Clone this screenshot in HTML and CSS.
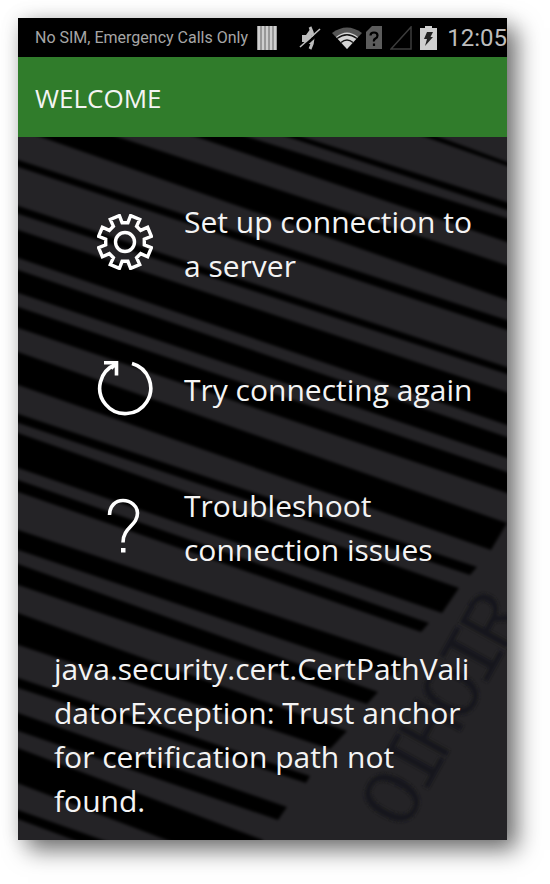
FILE: index.html
```html
<!DOCTYPE html>
<html lang="en">
<head>
<meta charset="utf-8">
<meta name="viewport" content="width=device-width, initial-scale=1">
<title>Welcome</title>
<link rel="stylesheet" href="styles.css">
</head>
<body>
<div class="screen">
  <div class="status">
    <span class="status__carrier">No SIM, Emergency Calls Only</span>
    <svg class="status__barcode" width="20" height="24" viewBox="0 0 20 24" aria-hidden="true">
      <rect width="20" height="24" fill="#8c8c8c"/>
      <path d="M2 0v24M6 0v24M10 0v24M14 0v24M18 0v24" stroke="#cfcfcf" stroke-width="2.4"/>
    </svg>
    <svg class="status__mute" width="22" height="24" viewBox="0 0 22 24" aria-hidden="true">
      <path d="M3 9h4l5-7v16l-4 0-1-2H3z" fill="#bdbdbd"/>
      <path d="M11 1Q17 12 11 23" fill="none" stroke="#bdbdbd" stroke-width="3"/>
      <path d="M2.500 22.500L22.500 4.500" stroke="#000" stroke-width="3"/>
      <path d="M1 21L21 3" stroke="#bdbdbd" stroke-width="1.6"/>
    </svg>
    <svg class="status__wifi" width="30" height="22" viewBox="0 0 30 22" aria-hidden="true">
      <path d="M0 6Q15-5 30 6L15 22z" fill="#555"/>
      <path d="M4 10Q15 1 26 10L15 22z" fill="#d4d4d4"/>
      <path d="M5 11.500Q15 4 25 11.500M9 15.500Q15 10.500 21 15.500" fill="none" stroke="#111" stroke-width="1.500"/>
    </svg>
    <svg class="status__sim" width="16" height="23" viewBox="0 0 16 23" aria-hidden="true">
      <path d="M6 0H16V23H0V6z" fill="#5c5c5c"/>
      <path d="M4.500 9.500Q4.500 6.500 8 6.500T11.500 9.500Q11.500 11.500 9.500 12.500T8 15.500M8 17.500v2.500" fill="none" stroke="#000" stroke-width="2.200"/>
    </svg>
    <svg class="status__signal" width="22" height="24" viewBox="0 0 22 24" aria-hidden="true">
      <path d="M21 1V23H1z" fill="none" stroke="#3c3c3c" stroke-width="1.500"/>
    </svg>
    <svg class="status__battery" width="17" height="24" viewBox="0 0 17 24" aria-hidden="true">
      <path d="M5 0h7v2h5v22H0V2h5z" fill="#cfcfcf"/>
      <path d="M7 6h6l-2.500 5H13L5 20l2-7H4z" fill="#222"/>
    </svg>
    <time class="status__clock">12:05</time>
  </div>
  <header class="bar"><h1 class="bar__title">WELCOME</h1></header>
  <main class="content">
    <svg class="backdrop" viewBox="0 0 489 703" preserveAspectRatio="none" aria-hidden="true">
      <defs><filter id="soft" x="-5%" y="-5%" width="110%" height="110%"><feGaussianBlur stdDeviation="1.5"/></filter></defs>
      <g filter="url(#soft)" fill="#040406">
        <path d="M405-6L495 27V31L385-8z"/>
        <path d="M260-8L495 67V75L240-10z"/>
        <path d="M205-8L495 83V107L155-8z"/>
        <path d="M76-8L495 130V165L0-8z"/>
        <path d="M-6 21L495 185V195L-6 28z"/>
        <path d="M-6 67L495 232V239L-6 75z"/>
        <path d="M-6 91L495 257V290L-6 119z"/>
        <path d="M-6 131L495 302V323L-6 154z"/>
        <path d="M-6 168L495 337V358L-6 189z"/>
        <path d="M-6 213L489 386L473 413L-6 246z"/>
        <path d="M-6 275L459 430L452 438L-6 284z"/>
        <path d="M-6 294L441 451L424 476L-6 329z"/>
        <path d="M-6 341L411 486L403 495L-6 353z"/>
        <path d="M-6 391L388 522L375 540L-6 411z"/>
        <path d="M-6 425L360 555L349 567L-6 446z"/>
        <path d="M-6 474L329 594L312 612L-6 506z"/>
        <path d="M-6 539L292 639L288 646L-6 549z"/>
        <path d="M-6 574L269 670L260 683L-6 592z"/>
        <path d="M-6 609L245 703V715H180L-6 644z"/>
        <path d="M-6 671L110 712H80L-6 680z"/>
      </g>
      <text class="backdrop__code" filter="url(#soft)" transform="translate(386 696) rotate(-61)" x="0 42 80 122 164 204">OIHOIR</text>
    </svg>
    <nav class="menu">
      <button class="menu__item menu__item--setup" type="button">
        <svg class="menu__icon" viewBox="0 0 56 56" aria-hidden="true">
          <g fill="none" stroke="#fff" stroke-width="3.400" stroke-linejoin="miter">
            <circle cx="28" cy="28" r="9.500"/>
            <path id="gear" d=""/>
          </g>
        </svg>
        <span>Set up connection to a server</span>
      </button>
      <button class="menu__item" type="button">
        <svg class="menu__icon" viewBox="0 0 56 56" aria-hidden="true">
          <g fill="none" stroke="#fff" stroke-width="3.600">
            <path d="M35 3.500A25.500 25.500 0 1 1 18.500 4.500"/>
            <path d="M7 2.700H19.500V15.500M19.500 2.700L14 8.500"/>
          </g>
        </svg>
        <span>Try connecting again</span>
      </button>
      <button class="menu__item" type="button">
        <svg class="menu__icon" viewBox="0 0 56 56" aria-hidden="true">
          <path d="M12.500 17C12.500 8 18.500 2.500 26 2.500S40.500 8 40.500 15C40.500 28 26 29 26 44.500" fill="none" stroke="#fff" stroke-width="3.600"/>
          <rect x="24" y="50" width="4.500" height="4.500" fill="#fff"/>
        </svg>
        <span>Troubleshoot connection issues</span>
      </button>
    </nav>
    <p class="error">java.security.cert.CertPathVali<wbr>datorException: Trust anchor for certification path not found.</p>
  </main>
</div>
<script src="gear.js"></script>
</body>
</html>
```
FILE: gear.js
```js
// Builds the outline of the eight-toothed settings gear.
const points = [];
for (let tooth = 0; tooth < 8; tooth++) {
  const middle = (tooth + 0.5) * 45;
  for (const [offset, radius] of [[-14, 19.5], [-10.5, 27], [10.5, 27], [14, 19.5]]) {
    const angle = (middle + offset) * Math.PI / 180;
    points.push((28 + radius * Math.cos(angle)).toFixed(2) + " " + (28 + radius * Math.sin(angle)).toFixed(2));
  }
}
document.getElementById("gear").setAttribute("d", "M" + points.join("L") + "Z");
```
FILE: styles.css
```css
* {
  box-sizing: border-box;
}

body {
  margin: 0;
  padding: 18px 43px 44px 18px;
  background: #fff;
  font-family: "Open Sans", "Noto Sans", sans-serif;
  color: #f4f4f4;
}

.screen {
  background: #242326;
  box-shadow: 10px 10px 22px rgba(0, 0, 0, 0.55), 0 0 18px rgba(0, 0, 0, 0.1);
}

.status {
  display: flex;
  align-items: center;
  height: 39px;
  padding-left: 17px;
  overflow: hidden;
  background: #000;
  color: #a6a6a6;
  font-family: Roboto, sans-serif;
  white-space: nowrap;
}

.status svg {
  flex: none;
}

.status__carrier {
  font-size: 16px;
}

.status__barcode {
  margin-left: auto;
}

.status__mute {
  margin-left: 22px;
}

.status__wifi {
  margin-left: 11px;
}

.status__sim {
  margin-left: 4px;
}

.status__signal {
  margin-left: 8px;
}

.status__battery {
  margin-left: 8px;
}

.status__clock {
  margin-left: 10px;
  font-size: 24px;
  color: #bdbdbd;
}

.bar {
  display: flex;
  align-items: center;
  height: 80px;
  padding: 2px 17px 0;
  background: #307c2b;
}

.bar__title {
  margin: 0;
  font-size: 26px;
  font-weight: 400;
}

.content {
  position: relative;
  padding: 63px 20px 17px 36px;
  overflow: hidden;
}

.backdrop {
  position: absolute;
  inset: 0;
  width: 100%;
  height: 100%;
}

.backdrop__code {
  font-family: "Liberation Mono", monospace;
  font-size: 84px;
  fill: #18181b;
}

.menu {
  position: relative;
  display: flex;
  flex-direction: column;
  gap: 72px;
  padding-left: 43px;
}

.menu__item {
  display: flex;
  align-items: center;
  gap: 31px;
  width: 100%;
  min-height: 44px;
  padding: 0;
  border: 0;
  background: none;
  color: inherit;
  font: inherit;
  font-size: 30px;
  line-height: 44px;
  text-align: left;
}

.menu__item--setup {
  margin-bottom: 8px;
}

.menu__icon {
  flex: none;
  width: 56px;
  height: 56px;
  margin: -8px 0 -4px;
}

.error {
  position: relative;
  margin: 75px 0 0;
  font-size: 30px;
  line-height: 44px;
}
```
